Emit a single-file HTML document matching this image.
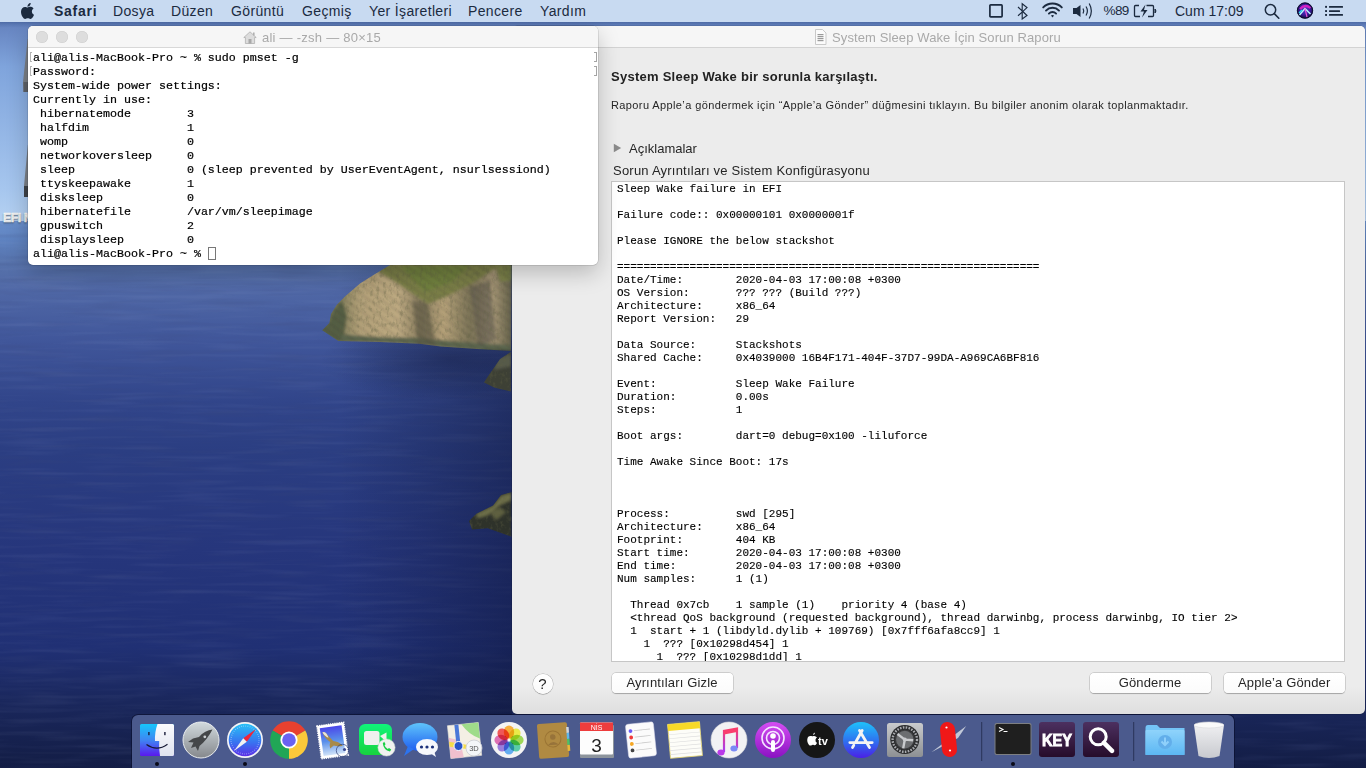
<!DOCTYPE html>
<html><head><meta charset="utf-8">
<style>
*{margin:0;padding:0;box-sizing:border-box}
html,body{width:1366px;height:768px;overflow:hidden}
body{position:relative;font-family:"Liberation Sans",sans-serif;background:#24336e}
.abs{position:absolute}
#wall{position:absolute;left:0;top:0}
#menubar{position:absolute;left:0;top:0;width:1366px;height:22px;background:#c8daf1;color:#1b2a3f;font-size:14px;z-index:10}
#menubar span{position:absolute;top:2.8px;white-space:nowrap;letter-spacing:.35px}
#menubar svg{position:absolute}
.win{position:absolute;border-radius:5px;overflow:hidden}
#term{left:28px;top:26px;width:570px;height:239px;background:#fff;box-shadow:0 8px 22px rgba(0,0,0,.22),0 0 0 .5px rgba(0,0,0,.2);z-index:5}
#term .tb{position:absolute;left:0;top:0;width:570px;height:22px;background:#f6f6f6;border-bottom:1px solid #d8d8d8}
.tl{position:absolute;top:5px;width:12px;height:12px;border-radius:6px;background:#dddddd;box-shadow:inset 0 0 0 .5px #cdcdcd}
#term pre{position:absolute;left:5px;top:25px;font-family:"Liberation Mono",monospace;font-size:11.667px;line-height:14px;color:#000;-webkit-text-stroke:.2px #000}
.brk{position:absolute;width:3px;height:13px;border:1px solid #b8b8b8}
#rep{left:512px;top:26px;width:853px;height:688px;background:linear-gradient(180deg,#ececec 0,#ececec 660px,#dedede 688px);box-shadow:0 0 0 .5px rgba(0,0,0,.2);z-index:3}
#rep .tb{position:absolute;left:0;top:0;width:853px;height:22px;background:#f6f6f6;border-bottom:1px solid #d3d3d3}
.ttl{position:absolute;top:4px;font-size:13px;color:#a9a9a9;white-space:nowrap}
#box{position:absolute;left:99px;top:155px;width:734px;height:481px;background:#fff;border:1px solid #c6c6c6;overflow:hidden}
#box pre{position:absolute;left:5px;top:1px;font-family:"Liberation Mono",monospace;font-size:11px;line-height:13px;color:#000;-webkit-text-stroke:.12px #000}
.btn{position:absolute;top:647.2px;height:20px;background:linear-gradient(#fff,#fbfbfb);border-radius:4px;box-shadow:0 0 0 .5px rgba(0,0,0,.22),0 .5px 1px rgba(0,0,0,.2);font-size:13px;color:#262626;text-align:center;line-height:20px;letter-spacing:.15px}
#dock{position:absolute;left:132px;top:715px;width:1102px;height:60px;background:#4b5a8d;border-radius:6px 6px 0 0;box-shadow:0 0 0 .7px rgba(5,8,35,.7);z-index:6}
.ic{position:absolute}
.dot{position:absolute;top:48px;width:4px;height:4px;border-radius:2px;background:#111}
</style></head><body>
<svg id="wall" width="1366" height="768" viewBox="0 0 1366 768">
 <defs>
  <linearGradient id="sky" x1="0" y1="0" x2="0" y2="1">
   <stop offset="0.095" stop-color="#4a66a0"/><stop offset="0.11" stop-color="#5a78b4"/>
   <stop offset="0.125" stop-color="#6886c2"/><stop offset="0.3" stop-color="#7fa4dc"/><stop offset="0.85" stop-color="#a6c6ee"/><stop offset="1" stop-color="#b6d2f2"/>
  </linearGradient>
  <linearGradient id="sea" x1="0" y1="0" x2="0" y2="1">
   <stop offset="0" stop-color="#6a90cc"/><stop offset="0.035" stop-color="#5e82c0"/>
   <stop offset="0.08" stop-color="#5671aa"/><stop offset="0.125" stop-color="#5068a6"/>
   <stop offset="0.22" stop-color="#40569a"/><stop offset="0.33" stop-color="#31458a"/>
   <stop offset="0.42" stop-color="#2b3e82"/><stop offset="0.6" stop-color="#26367c"/>
   <stop offset="0.78" stop-color="#203074"/><stop offset="0.88" stop-color="#1a275c"/><stop offset="1" stop-color="#131d45"/>
  </linearGradient>
  <linearGradient id="cliff" x1="0" y1="0" x2="1" y2="0.3">
   <stop offset="0" stop-color="#6f6e4c"/><stop offset="0.3" stop-color="#a8976c"/>
   <stop offset="0.6" stop-color="#8a8060"/><stop offset="1" stop-color="#66664a"/>
  </linearGradient>
 </defs>
 <rect x="0" y="0" width="1366" height="222" fill="url(#sky)"/>
 <rect x="0" y="221" width="1366" height="547" fill="url(#sea)"/>
 <linearGradient id="rdark" x1="0" y1="0" x2="1" y2="0"><stop offset="0" stop-color="#0a1030" stop-opacity="0"/><stop offset=".5" stop-color="#0a1030" stop-opacity=".2"/><stop offset="1" stop-color="#0a1030" stop-opacity=".42"/></linearGradient>
 <radialGradient id="idark" cx=".5" cy=".5" r=".5"><stop offset="0" stop-color="#0a1030" stop-opacity=".35"/><stop offset="1" stop-color="#0a1030" stop-opacity="0"/></radialGradient>
 <filter id="waves" x="0" y="0" width="100%" height="100%"><feTurbulence type="fractalNoise" baseFrequency="0.012 0.22" numOctaves="2" seed="7"/><feColorMatrix type="matrix" values="0 0 0 0 0.75  0 0 0 0 0.82  0 0 0 0 1  0 0 0 1.6 -0.75"/></filter>
 <filter id="wavesD" x="0" y="0" width="100%" height="100%"><feTurbulence type="fractalNoise" baseFrequency="0.015 0.18" numOctaves="2" seed="3"/><feColorMatrix type="matrix" values="0 0 0 0 0.05  0 0 0 0 0.07  0 0 0 0 0.2  0 0 0 -1.8 0.95"/></filter>
 <filter id="rock" x="0" y="0" width="100%" height="100%"><feTurbulence type="fractalNoise" baseFrequency="0.3 0.18" numOctaves="3" seed="11"/><feColorMatrix type="matrix" values="0 0 0 0 0.12  0 0 0 0 0.12  0 0 0 0 0.06  0 0 0 -3 1.55"/></filter>
 <filter id="rockL" x="0" y="0" width="100%" height="100%"><feTurbulence type="fractalNoise" baseFrequency="0.2 0.1" numOctaves="2" seed="4"/><feColorMatrix type="matrix" values="0 0 0 0 0.88  0 0 0 0 0.82  0 0 0 0 0.66  0 0 0 3 -1.7"/></filter>
 <clipPath id="isl"><path d="M390 265 L512 264 L511 351 L476.7 349 L440.8 346.5 L419 343.8 L379.7 342 L338.4 341 L322.2 330.3 L329.4 323 L331 314 L336.6 305 L345.5 296 L360 283.6 L374.3 274.6 Z M511 351.8 L500 359 L487.5 377 L484 382.4 L494.7 387.8 L511 391.4 Z M511.7 492 L501 495 L493 505.4 L476.3 513.75 L469 521 L472 529.4 L487.7 528.3 L511.7 536.7 Z"/></clipPath>
 <rect x="0" y="221" width="512" height="547" filter="url(#waves)" opacity=".08"/>
 <rect x="0" y="221" width="512" height="547" filter="url(#wavesD)" opacity=".25"/>
 <rect x="1234" y="715" width="132" height="53" filter="url(#wavesD)" opacity=".35"/>
 <rect x="340" y="265" width="172" height="450" fill="url(#rdark)"/>
 <ellipse cx="450" cy="360" rx="130" ry="40" fill="url(#idark)"/>
 
 <filter id="isoft" x="-5%" y="-5%" width="110%" height="110%"><feGaussianBlur stdDeviation="1.6"/></filter>
 <linearGradient id="cliffH" x1="322" y1="0" x2="512" y2="0" gradientUnits="userSpaceOnUse">
  <stop offset="0" stop-color="#5a6244"/><stop offset=".08" stop-color="#7e7c5a"/><stop offset=".2" stop-color="#b4a27a"/>
  <stop offset=".4" stop-color="#c0ac84"/><stop offset=".52" stop-color="#8a7e60"/><stop offset=".64" stop-color="#b8a47c"/>
  <stop offset=".78" stop-color="#7c7458"/><stop offset=".9" stop-color="#a89878"/><stop offset="1" stop-color="#62604a"/>
 </linearGradient>
 <pattern id="streaks" width="7" height="7" patternUnits="userSpaceOnUse" patternTransform="rotate(-55)"><rect width="7" height="7" fill="none"/><rect x="0" y="0" width="2.2" height="7" fill="#2e2a1c" opacity=".45"/></pattern>
 <g clip-path="url(#isl)"><g filter="url(#isoft)">
 <rect x="320" y="262" width="192" height="92" fill="url(#cliffH)"/>
 <path d="M385 264 L502 264 L478 280 L448 296 L428 304 L410 292 L392 280 L378 272 Z" fill="#7c8048"/>
 <path d="M400 266 L470 265 L452 282 L425 292 Z" fill="#6c843c" opacity=".6"/>
 <path d="M495 266 L512 264 L512 280 L500 282 Z" fill="#7a8446" opacity=".8"/>
 <path d="M336 334 L380 337 L420 338 L440 340 L476 343 L512 345 L512 353 L476.7 350 L440.8 347.5 L419 344.8 L379.7 343 L338.4 342 Z" fill="#5c6650"/>
 <path d="M322 331 L330 322 L334 310 L342 300 L347 316 L344 334 L338 342 Z" fill="#545e44"/>
 <path d="M412 300 L428 304 L436 345 L418 346 Z" fill="#5a5644" opacity=".55"/>
 <path d="M470 288 L490 280 L496 340 L478 346 Z" fill="#55524a" opacity=".5"/>
 <rect x="480" y="350" width="32" height="45" fill="#3c4036"/>
 <path d="M498 358 L511 354 L511 366 L494 370 Z" fill="#5e6050" opacity=".8"/>
 <rect x="465" y="490" width="47" height="48" fill="#2e302a"/>
 <path d="M476 514 L493 506 L501 496 L511 493 L511 500 L500 505 L488 515 L478 518 Z" fill="#6e7048"/>
 <path d="M490 512 L500 508 L506 512 L496 520 Z" fill="#5e6040"/>
 </g>
 <rect x="320" y="262" width="192" height="92" fill="url(#streaks)" opacity=".35" filter="url(#isoft)"/>
 <rect x="320" y="262" width="192" height="275" filter="url(#rock)" opacity=".35"/>
 </g>
 <path d="M27.6 39 L29 39 L29 92 L23.5 92 L23 82 Z" fill="#7a7f86"/>
 <rect x="23.5" y="82" width="5.5" height="10" fill="#5d6168"/>
 <path d="M27.8 145 L29 145 L29 197 L24 197 L24 186 Z" fill="#7a7f86"/>
 <rect x="24" y="186" width="5" height="11" fill="#3e4248"/>
 <text x="3" y="222" font-family="Liberation Sans" font-size="12" font-weight="bold" fill="#ffffff" stroke="#ffffff" stroke-width=".5" letter-spacing="-.3" style="text-shadow:0 1px 1.5px rgba(0,0,0,.4)">EFI N</text>
</svg>

<div id="menubar">
 <svg style="left:21px;top:2.5px" width="13" height="16" viewBox="0 0 814 1000"><path fill="#1b2a3f" d="M788.1 340.9c-5.8 4.5-108.2 62.2-108.2 190.5 0 148.4 130.3 200.9 134.2 202.2-.6 3.2-20.7 71.9-68.7 141.9-42.8 61.6-87.5 123.1-155.5 123.1s-85.5-39.5-164-39.5c-76.5 0-103.7 40.8-165.9 40.8s-105.6-57-155.5-127C46.7 790.7 0 663 0 541.8c0-194.4 126.4-297.5 250.8-297.5 66.1 0 121.2 43.4 162.7 43.4 39.5 0 101.1-46 176.3-46 28.5 0 130.9 2.6 198.3 99.2zm-234-181.5c31.1-36.9 53.1-88.1 53.1-139.3 0-7.1-.6-14.3-1.9-20.1-50.6 1.9-110.8 33.7-147.1 75.8-28.5 32.4-55.1 83.6-55.1 135.5 0 7.8 1.3 15.6 1.9 18.1 3.2.6 8.4 1.3 13.6 1.3 45.4 0 102.5-30.4 135.5-71.3z"/></svg>
 <span style="left:54px;font-weight:bold;letter-spacing:.75px">Safari</span>
 <span style="left:113px">Dosya</span>
 <span style="left:171px">Düzen</span>
 <span style="left:231px">Görüntü</span>
 <span style="left:302px">Geçmiş</span>
 <span style="left:369px">Yer İşaretleri</span>
 <span style="left:468px">Pencere</span>
 <span style="left:540px">Yardım</span>
 <svg style="left:988px;top:3px" width="16" height="16" viewBox="0 0 16 16"><rect x="1.9" y="1.9" width="12.2" height="11.9" rx=".8" fill="none" stroke="#1b2a3f" stroke-width="1.7"/></svg>
 <svg style="left:1016px;top:2px" width="14" height="18" viewBox="0 0 14 18"><path d="M2 5 L11 13.5 L6.2 17 L6.2 1.8 L11 5.6 L2 13.8" fill="none" stroke="#1b2a3f" stroke-width="1.15" stroke-linejoin="miter"/></svg>
 <svg style="left:1041px;top:2px" width="23" height="17" viewBox="0 0 23 17"><path d="M2.2 5.4 A13 13 0 0 1 20.8 5.4" fill="none" stroke="#1b2a3f" stroke-width="1.9" stroke-linecap="round"/><path d="M5 8.6 A9 9 0 0 1 18 8.6" fill="none" stroke="#1b2a3f" stroke-width="1.9" stroke-linecap="round"/><path d="M7.9 11.6 A5 5 0 0 1 15.1 11.6" fill="none" stroke="#1b2a3f" stroke-width="1.9" stroke-linecap="round"/><path d="M9.9 13.6 L11.5 15.6 L13.1 13.6 Q11.5 12.3 9.9 13.6 Z" fill="#1b2a3f"/></svg>
 <svg style="left:1072px;top:2px" width="22" height="18" viewBox="0 0 22 18"><path d="M1 6 L4.5 6 L8.5 3 L8.5 15 L4.5 12 L1 12 Z" fill="#1b2a3f"/><path d="M11 6.5 Q12.5 9 11 11.5" fill="none" stroke="#1b2a3f" stroke-width="1.2"/><path d="M14 4.5 Q16.8 9 14 13.5" fill="none" stroke="#1b2a3f" stroke-width="1.2"/><path d="M17.2 1.5 Q21.5 9 17.2 16.5" fill="none" stroke="#1b2a3f" stroke-width="1.2"/></svg>
 <span style="left:1103.5px;font-size:13.5px;letter-spacing:-.6px">%89</span>
 <svg style="left:1133px;top:4px" width="25" height="14" viewBox="0 0 25 14"><path d="M6 1.5 L2.5 1.5 Q1.5 1.5 1.5 2.5 L1.5 11.5 Q1.5 12.5 2.5 12.5 L7 12.5 M13.5 1.5 L19.5 1.5 Q20.5 1.5 20.5 2.5 L20.5 11.5 Q20.5 12.5 19.5 12.5 L15 12.5" fill="none" stroke="#1b2a3f" stroke-width="1.3"/><path d="M12.5 0.5 L7.5 7.5 L11 7.5 L9 13.5 L14.5 6 L11 6 Z" fill="#1b2a3f"/><path d="M22 5 Q24 7 22 9 Z" fill="#1b2a3f" stroke="#1b2a3f" stroke-width="1"/></svg>
 <span style="left:1175px;font-size:14px;letter-spacing:0">Cum 17:09</span>
 <svg style="left:1264px;top:3px" width="16" height="17" viewBox="0 0 16 17"><circle cx="6.5" cy="6.8" r="5.2" fill="none" stroke="#1b2a3f" stroke-width="1.5"/><path d="M10.3 10.6 L14.8 15.2" stroke="#1b2a3f" stroke-width="1.6" stroke-linecap="round"/></svg>
 <svg style="left:1296px;top:2px" width="18" height="18" viewBox="0 0 18 18"><defs><radialGradient id="siri" cx=".5" cy=".45" r=".55"><stop offset="0" stop-color="#5a3ad0"/><stop offset=".6" stop-color="#3a1a9a"/><stop offset="1" stop-color="#0c0c30"/></radialGradient></defs><circle cx="9" cy="8.6" r="8" fill="url(#siri)"/><path d="M4 7 Q9 1.5 14.5 6" fill="none" stroke="#e020c8" stroke-width="2.2" opacity=".9"/><path d="M3.5 13 L9 6.5 L14.5 12" fill="none" stroke="#b8f4ff" stroke-width="1.5"/><path d="M9 6.5 L11 15" fill="none" stroke="#f05ad8" stroke-width="1.1"/><path d="M3 11 L6 8" stroke="#2ae0f0" stroke-width="1.5"/><circle cx="9" cy="8.6" r="7.7" fill="none" stroke="#0a0a28" stroke-width=".9"/></svg>
 <svg style="left:1324px;top:3px" width="20" height="14" viewBox="0 0 20 14"><rect x="1.1" y="2.9" width="1.9" height="1.9" fill="#1b2a3f"/><rect x="1.1" y="7.1" width="1.9" height="1.9" fill="#1b2a3f"/><rect x="1.1" y="11" width="1.9" height="1.9" fill="#1b2a3f"/><rect x="5" y="3" width="14" height="1.8" rx=".5" fill="#1b2a3f"/><rect x="5" y="7.2" width="11" height="1.8" rx=".5" fill="#1b2a3f"/><rect x="5" y="11" width="14" height="1.8" rx=".5" fill="#1b2a3f"/></svg>
</div>

<div id="rep" class="win">
 <div class="tb">
  <svg class="abs" style="left:302px;top:3px" width="13" height="16" viewBox="0 0 13 16"><path d="M1.5 0.5 L8.5 0.5 L12 4 L12 15.5 L1.5 15.5 Z" fill="#fbfbfb" stroke="#c9c9c9" stroke-width="1"/><rect x="3.5" y="5" width="6" height="1.2" fill="#9a9a9a"/><rect x="3.5" y="7" width="6" height="1.2" fill="#9a9a9a"/><rect x="3.5" y="9" width="6" height="1.2" fill="#9a9a9a"/><rect x="3.5" y="11" width="6" height="1.2" fill="#9a9a9a"/></svg>
  <div class="ttl" style="left:320px;letter-spacing:.11px">System Sleep Wake İçin Sorun Raporu</div>
 </div>
 <div class="abs" style="left:99px;top:43px;font-size:13px;font-weight:bold;color:#222;letter-spacing:.26px;white-space:nowrap">System Sleep Wake bir sorunla karşılaştı.</div>
 <div class="abs" style="left:99px;top:72.5px;font-size:11px;color:#262626;letter-spacing:.39px;white-space:nowrap">Raporu Apple’a göndermek için “Apple’a Gönder” düğmesini tıklayın. Bu bilgiler anonim olarak toplanmaktadır.</div>
 <svg class="abs" style="left:101px;top:117px" width="9" height="10" viewBox="0 0 9 10"><path d="M0.8 0.8 L8.2 5 L0.8 9.2 Z" fill="#8b8b8b"/></svg>
 <div class="abs" style="left:117px;top:115px;font-size:13px;color:#262626;white-space:nowrap">Açıklamalar</div>
 <div class="abs" style="left:101px;top:137px;font-size:13px;color:#262626;letter-spacing:.22px;white-space:nowrap">Sorun Ayrıntıları ve Sistem Konfigürasyonu</div>
 <div id="box"><pre>Sleep Wake failure in EFI

Failure code:: 0x00000101 0x0000001f

Please IGNORE the below stackshot

================================================================
Date/Time:        2020-04-03 17:00:08 +0300
OS Version:       ??? ??? (Build ???)
Architecture:     x86_64
Report Version:   29

Data Source:      Stackshots
Shared Cache:     0x4039000 16B4F171-404F-37D7-99DA-A969CA6BF816

Event:            Sleep Wake Failure
Duration:         0.00s
Steps:            1

Boot args:        dart=0 debug=0x100 -liluforce

Time Awake Since Boot: 17s



Process:          swd [295]
Architecture:     x86_64
Footprint:        404 KB
Start time:       2020-04-03 17:00:08 +0300
End time:         2020-04-03 17:00:08 +0300
Num samples:      1 (1)

  Thread 0x7cb    1 sample (1)    priority 4 (base 4)
  &lt;thread QoS background (requested background), thread darwinbg, process darwinbg, IO tier 2&gt;
  1  start + 1 (libdyld.dylib + 109769) [0x7fff6afa8cc9] 1
    1  ??? [0x10298d454] 1
      1  ??? [0x10298d1dd] 1</pre></div>
 <div class="abs" style="left:20.5px;top:647.5px;width:20px;height:20px;border-radius:10px;background:linear-gradient(#fff,#f9f9f9);box-shadow:0 0 0 .5px rgba(0,0,0,.25),0 .5px 1px rgba(0,0,0,.2);font-size:15px;text-align:center;line-height:20px;color:#262626">?</div>
 <div class="btn" style="left:99.5px;width:121px">Ayrıntıları Gizle</div>
 <div class="btn" style="left:577.5px;width:121px">Gönderme</div>
 <div class="btn" style="left:712px;width:120.5px">Apple’a Gönder</div>
</div>

<div id="term" class="win">
 <div class="tb">
  <div class="tl" style="left:8px"></div><div class="tl" style="left:28px"></div><div class="tl" style="left:48px"></div>
  <svg class="abs" style="left:215px;top:5px" width="14" height="13" viewBox="0 0 14 13"><path d="M7 0.8 L13.2 6.5 L11.6 6.5 L11.6 12.5 L2.4 12.5 L2.4 6.5 L0.8 6.5 Z" fill="#dcdcdc" stroke="#b0b0b0" stroke-width=".8"/><rect x="5.5" y="8" width="3" height="4.5" fill="#a8a8a8"/><rect x="10" y="1.5" width="1.6" height="3" fill="#b0b0b0"/></svg>
  <div class="ttl" style="left:234px;letter-spacing:.25px">ali — -zsh — 80×15</div>
 </div>
 <div class="abs" style="left:2px;top:26px;width:2px;height:10px;border:1px solid #b4b4b4;border-right:none"></div>
 <div class="abs" style="left:2px;top:40px;width:2px;height:10px;border:1px solid #b4b4b4;border-right:none"></div>
 <div class="abs" style="left:566px;top:26px;width:2.5px;height:10px;border:1.3px solid #a4a4a4;border-left:none"></div>
 <div class="abs" style="left:566px;top:40px;width:2.5px;height:10px;border:1.3px solid #a4a4a4;border-left:none"></div>
 <pre>ali@alis-MacBook-Pro ~ % sudo pmset -g
Password:
System-wide power settings:
Currently in use:
 hibernatemode        3
 halfdim              1
 womp                 0
 networkoversleep     0
 sleep                0 (sleep prevented by UserEventAgent, nsurlsessiond)
 ttyskeepawake        1
 disksleep            0
 hibernatefile        /var/vm/sleepimage
 gpuswitch            2
 displaysleep         0
ali@alis-MacBook-Pro ~ % </pre>
 <div class="abs" style="left:180px;top:221px;width:8px;height:13px;border:1px solid #777"></div>
</div>

<div id="dock">
<svg class="abs" style="left:0;top:0" width="1102" height="53" viewBox="132 715 1102 53">
<defs>
 <linearGradient id="fnL" x1="0" y1="0" x2="0" y2="1"><stop offset="0" stop-color="#16c6fb"/><stop offset=".5" stop-color="#3e86f3"/><stop offset="1" stop-color="#5a18ee"/></linearGradient>
 <linearGradient id="fnR" x1="0" y1="0" x2="0" y2="1"><stop offset="0" stop-color="#fbfbfd"/><stop offset="1" stop-color="#dfe3ef"/></linearGradient>
 <linearGradient id="lpG" x1="0" y1="0" x2="0" y2="1"><stop offset="0" stop-color="#d2dade"/><stop offset="1" stop-color="#85888c"/></linearGradient>
 <linearGradient id="sfG" x1="0" y1="0" x2="0" y2="1"><stop offset="0" stop-color="#27c1f7"/><stop offset=".6" stop-color="#3a6ff0"/><stop offset="1" stop-color="#5b2ee6"/></linearGradient>
 <linearGradient id="msG" x1="0" y1="0" x2="0" y2="1"><stop offset="0" stop-color="#5fc4fb"/><stop offset="1" stop-color="#1f5ef0"/></linearGradient>
 <linearGradient id="pcG" x1="0" y1="0" x2="0" y2="1"><stop offset="0" stop-color="#d54ef3"/><stop offset="1" stop-color="#8a12c2"/></linearGradient>
 <linearGradient id="asG" x1="0" y1="0" x2="0" y2="1"><stop offset="0" stop-color="#1ec2fa"/><stop offset=".55" stop-color="#2f6ef0"/><stop offset="1" stop-color="#4a20e6"/></linearGradient>
 <linearGradient id="spG" x1="0" y1="0" x2="0" y2="1"><stop offset="0" stop-color="#c9cbcd"/><stop offset="1" stop-color="#8d9093"/></linearGradient>
 <linearGradient id="kyG" x1="0" y1="0" x2="0" y2="1"><stop offset="0" stop-color="#4c3060"/><stop offset="1" stop-color="#260c2a"/></linearGradient>
 <linearGradient id="dlG" x1="0" y1="0" x2="0" y2="1"><stop offset="0" stop-color="#8fd3fb"/><stop offset="1" stop-color="#5cb7f3"/></linearGradient>
 <linearGradient id="trG" x1="0" y1="0" x2="0" y2="1"><stop offset="0" stop-color="#f2f2f4"/><stop offset="1" stop-color="#c8cacf"/></linearGradient>
 <linearGradient id="muG" x1="0" y1="0" x2="0" y2="1"><stop offset="0" stop-color="#fc3d6b"/><stop offset="1" stop-color="#a23df7"/></linearGradient>
 <linearGradient id="ftG" x1="0" y1="0" x2="0" y2="1"><stop offset="0" stop-color="#10f47a"/><stop offset="1" stop-color="#18d23e"/></linearGradient>
 <linearGradient id="mlG" x1="0" y1="0" x2="0" y2="1"><stop offset="0" stop-color="#4a46ea"/><stop offset=".5" stop-color="#5a90ea"/><stop offset="1" stop-color="#cfe2f8"/></linearGradient>
</defs>
<!-- Finder -->
<rect x="140" y="724" width="34" height="32" rx="1.5" fill="url(#fnL)"/>
<path d="M157.5 724 L172.5 724 Q174 724 174 725.5 L174 754.5 Q174 756 172.5 756 L160 756 Q158.6 748 159.2 741 L155 741 Q154.6 732 157.5 724 Z" fill="url(#fnR)"/>
<rect x="148.2" y="732" width="1.4" height="3.2" fill="#1a1d3a"/><rect x="164.2" y="732" width="1.4" height="3.2" fill="#1a1d3a"/>
<path d="M146.5 744.5 Q157 752 167.5 744.2" fill="none" stroke="#151833" stroke-width="1.2"/>
<circle cx="157" cy="764" r="2" fill="#0a0a18"/>
<!-- Launchpad -->
<circle cx="201" cy="740" r="18" fill="url(#lpG)" stroke="#e9ecee" stroke-width="1"/>
<path d="M212.5 729.5 Q205 730 199 737 L193 738.5 L188 742 L193.5 742.5 L191 748 L195.5 746.5 L198 751 L199.5 746 Q207 740 212.5 729.5 Z" fill="#454749"/>
<circle cx="204.8" cy="736.8" r="1.4" fill="#cfd3d6"/>
<!-- Safari -->
<circle cx="245" cy="740" r="18" fill="#f4f4f6"/>
<circle cx="245" cy="740" r="16.3" fill="url(#sfG)"/>
<circle cx="245" cy="740" r="14" fill="none" stroke="#d6e6ff" stroke-width="1.2" stroke-dasharray="0.6 1.6" opacity=".7"/>
<path d="M256 729 L246.8 741.8 L243.2 738.2 Z" fill="#f0243a"/>
<path d="M234 751 L243.2 738.2 L246.8 741.8 Z" fill="#f2f2f2"/>
<circle cx="245" cy="764" r="2" fill="#0a0a18"/>
<!-- Chrome -->
<path d="M289 740 L272.72 730.60 A18.8 18.8 0 0 1 305.28 730.60 Z" fill="#e8412f"/><path d="M289 740 L305.28 730.60 A18.8 18.8 0 0 1 289.00 758.80 Z" fill="#fbc93a"/><path d="M289 740 L289.00 758.80 A18.8 18.8 0 0 1 272.72 730.60 Z" fill="#21a656"/>
<circle cx="289" cy="740" r="8.6" fill="#fff"/>
<circle cx="289" cy="740" r="6.8" fill="#6a62f2"/>
<!-- Mail stamp -->
<g transform="rotate(-8 333 740)">
<rect x="319" y="724" width="27" height="33" fill="#fff" stroke="#fff" stroke-width="1.6" stroke-dasharray="1.2 1"/>
<rect x="321.5" y="726.5" width="22" height="28" fill="url(#mlG)"/>
<path d="M323.5 731 Q326 730 327.5 733 Q330 737 333 741 Q338 742 342 747 Q337 747.5 333 745.5 L329 748 Q328.5 744 330 741.5 Q325 737 323.5 731 Z" fill="#a88a4a"/>
<path d="M323.5 731 Q326 730 327.5 733 L329 737 Q326 736 323.5 731 Z" fill="#e8e4dc"/>
</g>
<circle cx="342.5" cy="750.5" r="6.2" fill="none" stroke="#2a3870" stroke-width=".9" opacity=".75"/>
<circle cx="344.5" cy="749.5" r="1.6" fill="#3a4890"/>
<!-- FaceTime -->
<rect x="359" y="724" width="33" height="31" rx="6" fill="url(#ftG)"/>
<rect x="364" y="731" width="15.5" height="14" rx="2.5" fill="#eef0ee"/>
<path d="M380 736 L386.5 732.5 L386.5 742 Z" fill="#eef0ee"/>
<circle cx="386.5" cy="747.5" r="8.6" fill="#f0f3f0" stroke="#d0d8d0" stroke-width=".5"/>
<path d="M382.8 743.2 Q383.3 749.8 390 751.5 L391.2 749.6 L389 748 L387.7 749 Q385.2 747.8 384.6 745.3 L385.6 744.2 L384.2 741.8 Z" fill="#19d045"/>
<!-- Messages -->
<ellipse cx="420" cy="737" rx="17.5" ry="14" fill="url(#msG)"/>
<path d="M408 746 L404 756 L414 749 Z" fill="#2c74f0"/>
<ellipse cx="427" cy="747" rx="11" ry="8" fill="#f6f8fc"/>
<path d="M430 753 L436 757 L434 751 Z" fill="#f6f8fc"/>
<circle cx="421.5" cy="747" r="1.6" fill="#1a2f7a"/><circle cx="427" cy="747" r="1.6" fill="#1a2f7a"/><circle cx="432.5" cy="747" r="1.6" fill="#1a2f7a"/>
<!-- Maps -->
<g transform="rotate(-6 465 740)">
<rect x="449" y="724" width="31" height="33" fill="#f4efe4" stroke="#e6e2da" stroke-width=".6"/>
<path d="M463 724 L480 724 L480 740 Q470 736 463 724 Z" fill="#9fdc8a"/>
<path d="M449 736 L460 740 L462 757 L449 757 Z" fill="#f0b4c8" opacity=".8"/>
<path d="M449 740 L470 746 L470 750 L449 745 Z" fill="#f5dc4a"/>
<rect x="456" y="724" width="4" height="22" fill="#4a78d8"/>
</g>
<circle cx="458.5" cy="746" r="4.5" fill="#2a54c8" stroke="#fff" stroke-width="1"/>
<circle cx="474" cy="748" r="8" fill="#f4f6f8" stroke="#c9ccd2" stroke-width=".8"/>
<text x="474" y="750.8" font-family="Liberation Sans" font-size="7.5" text-anchor="middle" fill="#555">3D</text>
<!-- Photos -->
<circle cx="509" cy="740" r="18" fill="#f4f4f4"/>
<g transform="translate(509 740)" style="isolation:isolate"><ellipse cx="0" cy="-8" rx="5.2" ry="6.6" fill="#f7a21c" opacity=".85" transform="rotate(0)" style="mix-blend-mode:multiply"/><ellipse cx="0" cy="-8" rx="5.2" ry="6.6" fill="#e8e82a" opacity=".85" transform="rotate(45)" style="mix-blend-mode:multiply"/><ellipse cx="0" cy="-8" rx="5.2" ry="6.6" fill="#8ed23a" opacity=".85" transform="rotate(90)" style="mix-blend-mode:multiply"/><ellipse cx="0" cy="-8" rx="5.2" ry="6.6" fill="#3ec49a" opacity=".85" transform="rotate(135)" style="mix-blend-mode:multiply"/><ellipse cx="0" cy="-8" rx="5.2" ry="6.6" fill="#4aa0ee" opacity=".85" transform="rotate(180)" style="mix-blend-mode:multiply"/><ellipse cx="0" cy="-8" rx="5.2" ry="6.6" fill="#8a6ad8" opacity=".85" transform="rotate(225)" style="mix-blend-mode:multiply"/><ellipse cx="0" cy="-8" rx="5.2" ry="6.6" fill="#d858a8" opacity=".85" transform="rotate(270)" style="mix-blend-mode:multiply"/><ellipse cx="0" cy="-8" rx="5.2" ry="6.6" fill="#ee3c3c" opacity=".85" transform="rotate(315)" style="mix-blend-mode:multiply"/></g>
<!-- Contacts -->
<g transform="rotate(-4 553 740)">
<rect x="538" y="723" width="30" height="35" rx="2" fill="#b08a42"/>
<rect x="567" y="728" width="2.5" height="6" fill="#cfd6de"/><rect x="567" y="734" width="2.5" height="6" fill="#5fb8e8"/><rect x="567" y="740" width="2.5" height="6" fill="#4cc266"/><rect x="567" y="746" width="2.5" height="6" fill="#e8b83a"/>
<circle cx="553" cy="739" r="8" fill="none" stroke="#9a7434" stroke-width="1"/>
<circle cx="553" cy="737" r="2.8" fill="#97733a"/>
<path d="M547.5 745 Q553 739 558.5 745 Z" fill="#97733a"/>
</g>
<!-- Calendar -->
<rect x="580" y="725" width="34" height="33" rx="1" fill="#8d949c"/>
<rect x="580" y="722.5" width="33" height="32" rx="1" fill="#fdfdfd"/>
<path d="M580 722.5 L613 722.5 L613 731 L580 731 Z" fill="#ee3d3d"/>
<text x="596.5" y="730" font-family="Liberation Sans" font-size="7" text-anchor="middle" fill="#fff">NİS</text>
<text x="596.5" y="751.5" font-family="Liberation Sans" font-size="19" text-anchor="middle" fill="#222">3</text>
<!-- Reminders -->
<g transform="rotate(-6 641 740)">
<rect x="627" y="723" width="28" height="34" rx="2.5" fill="#fbfbfb" stroke="#dde" stroke-width=".5"/>
<circle cx="631.5" cy="730" r="1.9" fill="#6a5af5"/><circle cx="631.5" cy="736.5" r="1.9" fill="#f03a3a"/><circle cx="631.5" cy="743" r="1.9" fill="#f5a623"/><circle cx="631.5" cy="749.5" r="1.9" fill="#444"/>
<rect x="635" y="729.6" width="16" height=".8" fill="#ccc"/><rect x="635" y="736.1" width="16" height=".8" fill="#ccc"/><rect x="635" y="742.6" width="16" height=".8" fill="#ccc"/><rect x="635" y="749.1" width="16" height=".8" fill="#ccc"/>
</g>
<!-- Notes -->
<g transform="rotate(-5 685 740)">
<rect x="669" y="723" width="32" height="34" fill="#fdfdf8" stroke="#e8d870" stroke-width=".8"/>
<rect x="669" y="723" width="32" height="6.5" fill="#f7d928"/>
<rect x="669" y="733" width="32" height=".6" fill="#ddd"/><rect x="669" y="737" width="32" height=".6" fill="#ddd"/><rect x="669" y="741" width="32" height=".6" fill="#ddd"/><rect x="669" y="745" width="32" height=".6" fill="#ddd"/><rect x="669" y="749" width="32" height=".6" fill="#ddd"/><rect x="669" y="753" width="32" height=".6" fill="#ddd"/>
</g>
<!-- Music -->
<circle cx="729" cy="740" r="18" fill="#f2f2f4" stroke="#ddd" stroke-width=".6"/>
<path d="M724 752 L724 731 L737 728.5 L737 748" fill="none" stroke="url(#muG)" stroke-width="2.2"/>
<path d="M724 731 L737 728.5 L737 732 L724 734.5 Z" fill="#fa3d6d"/>
<ellipse cx="721" cy="752.5" rx="3.6" ry="3" fill="#b93ae8"/>
<ellipse cx="734" cy="748.5" rx="3.6" ry="3" fill="#7a8af5"/>
<!-- Podcasts -->
<circle cx="773" cy="740" r="18" fill="url(#pcG)"/>
<circle cx="773" cy="738" r="11" fill="none" stroke="#f4e4ff" stroke-width="1.6"/>
<circle cx="773" cy="738" r="6.5" fill="none" stroke="#f4e4ff" stroke-width="1.6"/>
<circle cx="773" cy="736" r="2.8" fill="#fff"/>
<rect x="771" y="740" width="4" height="12" rx="2" fill="#fff"/>
<!-- TV -->
<circle cx="817" cy="740" r="18" fill="#161616"/>
<path d="M808 737 Q806 741 809 745 Q810.5 746 812 745 Q813 744.5 814 745 Q815.5 746 817 743 Q815 741.5 815.5 739.5 Q816 738 817 737.5 Q815.5 735.5 813.5 736 Q812.5 736.5 811.5 736 Q809.5 735.5 808 737 Z M813 735 Q813 733 815 732.5 Q815 734.5 813 735 Z" fill="#fff"/>
<text x="818" y="745" font-family="Liberation Sans" font-size="11" font-weight="bold" fill="#fff">tv</text>
<!-- App Store -->
<circle cx="861" cy="740" r="18" fill="url(#asG)"/>
<path d="M852.5 747.5 L853.8 745.3 M856 741.5 L862.2 730.5 M859.5 730.5 L869.5 747.5 M849.8 742.6 L872.2 742.6" stroke="#f4f4f4" stroke-width="2.8" stroke-linecap="round"/>
<!-- System Preferences -->
<rect x="887" y="723" width="36" height="34" rx="2.5" fill="url(#spG)"/>
<circle cx="904.8" cy="739.6" r="14.5" fill="#2a2b2d"/>
<circle cx="904.8" cy="739.6" r="12.2" fill="none" stroke="#a9abaf" stroke-width="2.4" stroke-dasharray="1.6 1.3"/>
<circle cx="904.8" cy="739.6" r="10.2" fill="#3a3b3d"/>
<circle cx="904.8" cy="739.6" r="8.8" fill="#6c6e71"/>
<path d="M904.8 739.6 L897.5 734 M904.8 739.6 L913.2 740.2 M904.8 739.6 L903.2 748.4" stroke="#c9cbce" stroke-width="2.4"/>
<circle cx="904.8" cy="739.6" r="2" fill="#c9cbce"/>
<!-- xScope knife -->
<path d="M931.4 752.3 L966.2 726 L958 738 Z" fill="#c2c9d8"/>
<rect x="941" y="722" width="15" height="35" rx="7.5" fill="#f01818" transform="rotate(-6 948.5 739.5)"/>
<circle cx="946.5" cy="727.5" r="1.1" fill="#fff"/><circle cx="950" cy="750.5" r="1.1" fill="#fff"/>
<!-- separator -->
<rect x="981.2" y="722" width="1" height="39" fill="#2a3358"/>
<!-- Terminal -->
<rect x="994.5" y="723" width="37" height="32" rx="2" fill="#7d7f82"/>
<rect x="995.5" y="724" width="35" height="30" rx="1.5" fill="#1f1f1f"/>
<path d="M999 727.5 L1003 729.5 L999 731.5" fill="none" stroke="#fff" stroke-width="1.1"/>
<rect x="1003.5" y="731" width="4" height="1" fill="#fff"/>
<circle cx="1013" cy="764" r="2" fill="#0a0a18"/>
<!-- Keynote -->
<rect x="1039" y="722" width="36" height="35" rx="3" fill="url(#kyG)"/>
<text x="1057" y="746" font-family="Liberation Sans" font-size="16" font-weight="bold" text-anchor="middle" fill="#fff" stroke="#fff" stroke-width=".9" textLength="30" lengthAdjust="spacingAndGlyphs">KEY</text>
<!-- Magnifier -->
<rect x="1083" y="722" width="36" height="35" rx="3" fill="url(#kyG)"/>
<circle cx="1098.2" cy="736.8" r="8" fill="none" stroke="#fff" stroke-width="3"/>
<path d="M1104 742.8 L1112 750.8" stroke="#fff" stroke-width="4.6" stroke-linecap="round"/>
<!-- separator -->
<rect x="1133.2" y="722" width="1" height="39" fill="#2a3358"/>
<!-- Downloads -->
<path d="M1145.5 728 Q1145.5 725 1148 725 L1157 725 L1160 728 L1184.5 728 L1184.5 755 L1145.5 755 Z" fill="#74c4f6"/>
<rect x="1145.5" y="730" width="39" height="25" rx="1" fill="url(#dlG)"/>
<circle cx="1165" cy="742" r="7" fill="#62aeea"/>
<path d="M1165 737.5 L1165 744.5 M1161.5 741.5 L1165 745 L1168.5 741.5" fill="none" stroke="#8fd0fb" stroke-width="2"/>
<!-- Trash -->
<path d="M1194 725 Q1209 720 1224 725 L1219.5 756 Q1209 760 1198.5 756 Z" fill="url(#trG)"/>
<ellipse cx="1209" cy="725" rx="15" ry="3" fill="#fafafa" stroke="#d8d8dc" stroke-width=".6"/>
</svg>
</div>

</body></html>
